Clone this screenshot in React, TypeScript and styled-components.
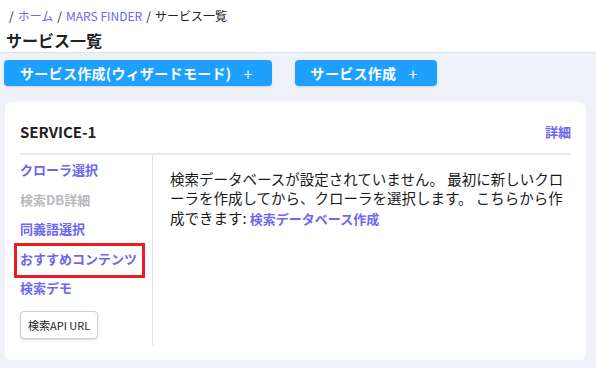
import styled, { createGlobalStyle } from 'styled-components';

const GlobalStyle = createGlobalStyle`
	html, body {
		margin: 0;
		padding: 0;
		background-color: #eef1f8;
		font-family: 'Noto Sans CJK JP', 'Noto Sans', sans-serif;
		color: #1f1f1f;
	}
`;

const Page = styled.div`
	min-height: 368px;
	background-color: #eef1f8;
`;

const Header = styled.header`
	background-color: #ffffff;
	border-bottom: 1px solid #e1e4eb;
	padding: 7px 6px 0;
	height: 45px;
`;

const Breadcrumb = styled.nav`
	display: flex;
	align-items: center;
	gap: 4px;
	font-size: 12px;
	line-height: 18px;
	padding-left: 3px;
	color: #222;
`;

const Crumb = styled.a`
	color: #6d67ef;
	text-decoration: none;
`;

const Title = styled.h1`
	margin: 4px 0 0;
	font-size: 16px;
	line-height: 22px;
	font-weight: 700;
	color: #222;
`;

const Toolbar = styled.div`
	display: flex;
	gap: 23px;
	padding: 7px 4px 0;
`;

const PrimaryButton = styled.button`
	display: flex;
	align-items: center;
	height: 26px;
	padding: 0 19px 0 16px;
	border: none;
	border-radius: 4px;
	background-color: #1ea1fe;
	color: #ffffff;
	font-family: inherit;
	font-size: 14px;
	font-weight: 700;
	letter-spacing: 0.3px;
	box-shadow: 0 1px 2px rgba(0, 0, 0, 0.12);
	cursor: pointer;
`;

const Plus = styled.span`
	margin-left: 12px;
	font-weight: 400;
	font-size: 16px;
`;

const Card = styled.section`
	margin: 16px 10px 0 5px;
	background-color: #ffffff;
	border-radius: 6px;
	padding: 19px 15px 14px;
	height: 258px;
	box-sizing: border-box;
`;

const CardHeader = styled.div`
	display: flex;
	justify-content: space-between;
	align-items: center;
	height: 20px;
	padding-bottom: 12px;
	border-bottom: 2px solid #e8e9ee;
`;

const CardTitle = styled.h2`
	margin: 0;
	font-size: 15px;
	font-weight: 600;
	color: #222;
`;

const LinkText = styled.a<{ $size?: number }>`
	color: #6d67ef;
	font-size: ${(p) => p.$size ?? 13}px;
	font-weight: 700;
	text-decoration: none;
`;

const CardBody = styled.div`
	display: flex;
`;

const SideMenu = styled.ul`
	list-style: none;
	margin: 0;
	padding: 5px 0 0;
	width: 132px;
	height: 186px;
	border-right: 1px solid #e3e3e3;
	display: flex;
	flex-direction: column;
	align-items: flex-start;
	gap: 10px;
`;

const MenuItem = styled.li<{ $disabled?: boolean; $highlight?: boolean }>`
	font-size: 13px;
	line-height: 19.5px;
	font-weight: 700;
	color: ${(p) => (p.$disabled ? '#b9b9bc' : '#6d67ef')};
	${(p) =>
		p.$highlight &&
		`
		border: 3px solid #ec1c24;
		margin: -6px 0 -10px -6px;
		padding: 3px 5px 7px 3px;
	`}
`;

const UrlButton = styled.button`
	margin-top: 3px;
	height: 28px;
	padding: 0 7px;
	border: 1px solid #cfcfcf;
	border-radius: 4px;
	background-color: #ffffff;
	box-shadow: 0 1px 2px rgba(0, 0, 0, 0.15);
	font-family: inherit;
	font-size: 11px;
	color: #222;
	cursor: pointer;
`;

const Content = styled.div`
	flex: 1;
	padding: 14px 0 0 17px;
	font-size: 14.5px;
	line-height: 19px;
	color: #1a1a1a;
`;

const LastLine = styled.span`
	display: inline-block;
	margin-top: 1px;
`;

const App = () => {
	return (
		<Page>
			<GlobalStyle />
			<Header>
				<Breadcrumb>
					<span>/</span>
					<Crumb>ホーム</Crumb>
					<span>/</span>
					<Crumb>MARS FINDER</Crumb>
					<span>/</span>
					<span>サービス一覧</span>
				</Breadcrumb>
				<Title>サービス一覧</Title>
			</Header>

			<Toolbar>
				<PrimaryButton>
					サービス作成(ウィザードモード)
					<Plus>+</Plus>
				</PrimaryButton>
				<PrimaryButton>
					サービス作成
					<Plus>+</Plus>
				</PrimaryButton>
			</Toolbar>

			<Card>
				<CardHeader>
					<CardTitle>SERVICE-1</CardTitle>
					<LinkText>詳細</LinkText>
				</CardHeader>
				<CardBody>
					<SideMenu>
						<MenuItem>クローラ選択</MenuItem>
						<MenuItem $disabled>検索DB詳細</MenuItem>
						<MenuItem>同義語選択</MenuItem>
						<MenuItem $highlight>おすすめコンテンツ</MenuItem>
						<MenuItem>検索デモ</MenuItem>
						<UrlButton>検索API URL</UrlButton>
					</SideMenu>
					<Content>
						検索データベースが設定されていません。 最初に新しいクローラを作成してから、クローラを選択します。 こちらから作
						<LastLine>
							成できます: <LinkText>検索データベース作成</LinkText>
						</LastLine>
					</Content>
				</CardBody>
			</Card>
		</Page>
	);
};

export default App;
